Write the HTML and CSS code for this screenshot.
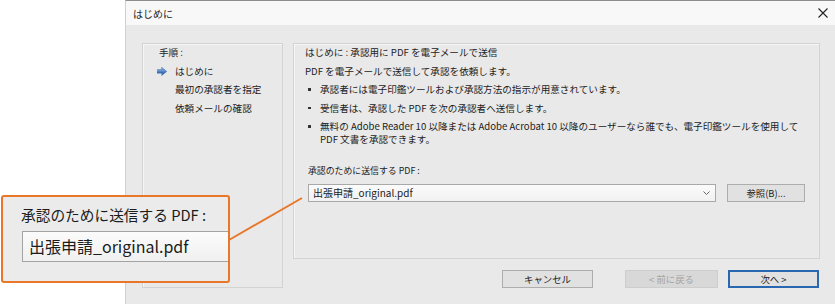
FILE: index.html
```html
<html>
  <head>
    <title>はじめに</title>
    <meta charset="utf-8" />
    <link rel="stylesheet" href="styles.css">
  </head>
  <body>
    <div class="stage">
      <div class="dialog">
        <div class="titlebar">
          <span class="title">はじめに</span>
          <svg class="close" width="10" height="10" viewBox="0 0 10 10">
            <path d="M0.5 0.5 L9.5 9.5 M9.5 0.5 L0.5 9.5" stroke="#222" stroke-width="1.1" fill="none"/>
          </svg>
        </div>
        <div class="body">
          <div class="steps">
            <div class="steps-head">手順 :</div>
            <ul class="step-list">
              <li class="step current">
                <svg class="step-arrow" width="10" height="9" viewBox="0 0 10 9">
                  <path d="M0 2.5 H4.5 V0 L10 4.5 L4.5 9 V6.5 H0 Z" fill="#3c6fb4"/>
                  <path d="M0 2.5 H4.5 V0 L10 4.5 H0 Z" fill="#6b96cf"/>
                </svg>
                はじめに
              </li>
              <li class="step">最初の承認者を指定</li>
              <li class="step">依頼メールの確認</li>
            </ul>
          </div>
          <div class="main">
            <div class="content">
              <p class="line">はじめに : 承認用に PDF を電子メールで送信</p>
              <p class="line">PDF を電子メールで送信して承認を依頼します。</p>
              <ul class="bullets">
                <li>承認者には電子印鑑ツールおよび承認方法の指示が用意されています。</li>
                <li>受信者は、承認した PDF を次の承認者へ送信します。</li>
                <li class="wrap">無料の Adobe Reader 10 以降または Adobe Acrobat 10 以降のユーザーなら誰でも、電子印鑑ツールを使用して<br>PDF 文書を承認できます。</li>
              </ul>
              <div class="field">
                <div class="field-label">承認のために送信する PDF :</div>
                <div class="field-row">
                  <div class="select">
                    <span class="select-value">出張申請_original.pdf</span>
                    <svg class="chevron" width="7" height="4" viewBox="0 0 7 4">
                      <path d="M0.5 0.5 L3.5 3.5 L6.5 0.5" stroke="#666" stroke-width="1" fill="none"/>
                    </svg>
                  </div>
                  <button class="btn browse">参照(B)...</button>
                </div>
              </div>
            </div>
            <div class="actions">
              <button class="btn cancel">キャンセル</button>
              <button class="btn back" disabled>&lt; 前に戻る</button>
              <button class="btn next">次へ &gt;</button>
            </div>
          </div>
        </div>
      </div>

      <svg class="leader" width="835" height="304" viewBox="0 0 835 304">
        <line x1="229" y1="240" x2="302" y2="198" stroke="#e8772a" stroke-width="2"/>
      </svg>

      <div class="callout">
        <div class="callout-label">承認のために送信する PDF :</div>
        <div class="callout-input">出張申請_original.pdf</div>
      </div>
    </div>
  </body>
</html>
```

FILE: styles.css
```css
body {
  margin: 0;
  background: #fff;
  font-family: "Noto Sans CJK JP", "Noto Sans", sans-serif;
  color: #1c1c1c;
}

.stage {
  position: relative;
  width: 835px;
  height: 304px;
  overflow: hidden;
}

.dialog {
  margin-left: 125px;
  width: 710px;
  height: 304px;
  background: #e9e9e9;
  border-top: 1px solid #8c8c8c;
  border-left: 1px solid #d0d0d0;
  box-sizing: border-box;
}

.titlebar {
  height: 24px;
  background: #f8f8f8;
  display: flex;
  align-items: center;
  justify-content: space-between;
  padding: 0 7px 0 7px;
  font-size: 10px;
}

.body {
  display: grid;
  grid-template-columns: 141px 527px;
  column-gap: 10px;
  padding: 18px 0 0 16px;
}

.steps,
.content {
  border: 1px solid #d3d3d3;
  box-shadow: inset 1px 1px 0 #f6f6f6;
  box-sizing: border-box;
}

.steps {
  height: 245px;
  padding: 3px 0 0 16px;
  font-size: 9.6px;
  line-height: 11px;
}

.steps-head {
  margin-bottom: 7.5px;
}

.step-list {
  list-style: none;
  margin: 0;
  padding: 0;
}

.step {
  padding-left: 16px;
  margin-bottom: 7.5px;
  display: flex;
  align-items: center;
}

.step.current {
  margin-left: -2px;
  padding-left: 0;
}

.step-arrow {
  margin-right: 8px;
}

.content {
  height: 216px;
  padding: 3px 0 0 11px;
  font-size: 9.6px;
  line-height: 11px;
}

.line {
  margin: 0 0 7.5px 0;
}

.bullets {
  list-style: none;
  margin: 0;
  padding: 0;
}

.bullets li {
  position: relative;
  padding-left: 15px;
  margin-bottom: 7.5px;
}

.bullets li.wrap {
  line-height: 13px;
  margin-top: -1px;
}

.bullets li::before {
  content: "";
  position: absolute;
  left: 3px;
  top: 4px;
  width: 2.5px;
  height: 2.5px;
  background: #333;
}

.bullets li.wrap::before {
  top: 5px;
}

.field {
  margin-top: 19px;
  padding-left: 3px;
}

.field-label {
  font-size: 8.9px;
  margin-bottom: 7.5px;
}

.field-row {
  display: flex;
  gap: 11px;
}

.select {
  width: 408px;
  height: 18px;
  box-sizing: border-box;
  border: 1px solid #a9a9a9;
  background: linear-gradient(#fbfbfb, #f1f1f1);
  display: flex;
  align-items: center;
  justify-content: space-between;
  padding: 0 5px 0 4px;
}

.select-value {
  font-size: 10px;
}

.btn {
  height: 18px;
  box-sizing: border-box;
  border: 1px solid #adadad;
  background: #e1e1e1;
  font-family: inherit;
  font-size: 9.4px;
  color: #1c1c1c;
  padding: 0;
  line-height: 16px;
}

.browse {
  width: 78px;
}

.actions {
  display: flex;
  justify-content: flex-end;
  gap: 10px;
  margin-top: 11px;
  padding-right: 1px;
}

.cancel {
  width: 91px;
  margin-right: 22px;
}

.back {
  width: 93px;
  background: #d8d8d8;
  border-color: #cdcdcd;
  color: #a3a3a3;
}

.next {
  width: 91px;
  border: 2px solid #2a67b1;
  line-height: 14px;
}

.leader {
  position: absolute;
  left: 0;
  top: 0;
}

.callout {
  position: absolute;
  left: 1px;
  top: 195px;
  width: 229px;
  height: 88px;
  box-sizing: border-box;
  border: 2px solid #e8772a;
  border-radius: 3px;
  background: #ebebeb;
  padding: 8px 0 0 18px;
  overflow: hidden;
}

.callout-label {
  font-size: 14.7px;
  line-height: 20px;
}

.callout-input {
  margin-top: 6px;
  height: 31px;
  box-sizing: border-box;
  border: 1px solid #a3a3a3;
  border-right: none;
  background: linear-gradient(#fbfbfb, #f0f0f0);
  font-size: 16px;
  line-height: 29px;
  padding-left: 6px;
  margin-left: 1px;
}
```
